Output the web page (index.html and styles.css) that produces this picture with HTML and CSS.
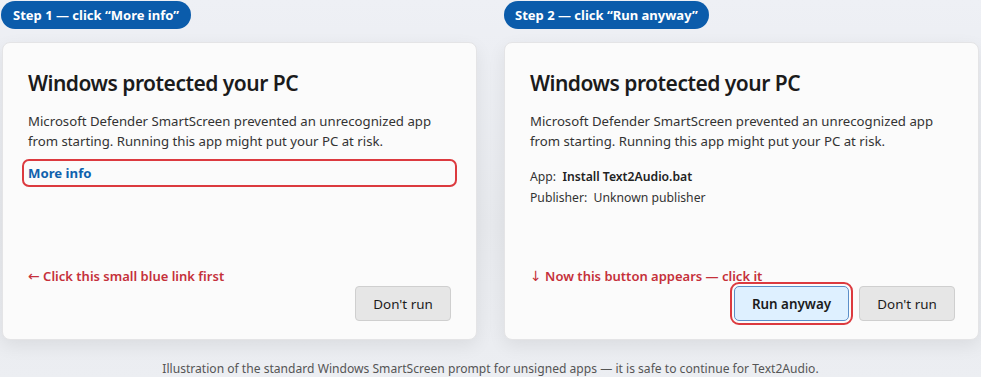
FILE: index.html
```html
<!DOCTYPE html>
<html lang="en">
<head>
    <meta charset="UTF-8">
    <meta name="viewport" content="width=device-width, initial-scale=1.0">
    <title>SmartScreen steps</title>
    <link rel="stylesheet" href="styles.css">
</head>
<body>
    <div class="steps">
        <div class="step">
            <span class="badge">Step 1 — click “More info”</span>
            <div class="dialog">
                <h2>Windows protected your PC</h2>
                <p class="desc">Microsoft Defender SmartScreen prevented an unrecognized app from starting. Running this app might put your PC at risk.</p>
                <div class="more-info">More info</div>
                <div class="spacer"></div>
                <div class="note"><span class="arrow">←</span> Click this small blue link first</div>
                <div class="actions">
                    <button class="btn">Don't run</button>
                </div>
            </div>
        </div>
        <div class="step">
            <span class="badge">Step 2 — click “Run anyway”</span>
            <div class="dialog dialog-right">
                <h2>Windows protected your PC</h2>
                <p class="desc">Microsoft Defender SmartScreen prevented an unrecognized app from starting. Running this app might put your PC at risk.</p>
                <div class="details">
                    <div>App:&nbsp; <strong>Install Text2Audio.bat</strong></div>
                    <div>Publisher:&nbsp; Unknown publisher</div>
                </div>
                <div class="spacer"></div>
                <div class="note"><span class="arrow">↓</span> Now this button appears — click it</div>
                <div class="actions">
                    <button class="btn btn-run">Run anyway</button>
                    <button class="btn">Don't run</button>
                </div>
            </div>
        </div>
    </div>
    <p class="caption">Illustration of the standard Windows SmartScreen prompt for unsigned apps — it is safe to continue for Text2Audio.</p>
</body>
</html>
```

FILE: styles.css
```css
body {
    font-family: "Noto Sans", "Open Sans", sans-serif;
    color: #1b1b1b;
    margin: 0;
    padding: 1px 2px 0 2px;
    background: linear-gradient(180deg, #eef0f5 0%, #e7e9ed 60%, #eceef2 100%);
    height: 376px;
    overflow: hidden;
}
.steps {
    display: grid;
    grid-template-columns: 475px 475px;
    gap: 27px;
}
.step {
    display: flex;
    flex-direction: column;
    align-items: flex-start;
}
.badge {
    background-color: #0b5cab;
    color: white;
    font-weight: 700;
    font-size: 13px;
    line-height: 28px;
    padding: 0 12px;
    border-radius: 14px;
    margin-left: -1px;
}
.step:nth-child(2) .badge {
    margin-left: 0;
    padding: 0 11px;
}
.dialog {
    align-self: stretch;
    margin-top: 13px;
    height: 298px;
    box-sizing: border-box;
    background-color: #fbfbfb;
    border: 1px solid #e4e4e6;
    border-radius: 8px;
    box-shadow: 0 6px 18px rgba(0, 0, 0, 0.07);
    padding: 26px 25px 18px 25px;
    display: flex;
    flex-direction: column;
}
.dialog-right {
    padding-right: 23px;
}
.dialog h2 {
    margin: 0;
    font-size: 21px;
    font-weight: 600;
    line-height: 28px;
    letter-spacing: -0.5px;
}
.desc {
    margin: 14px 0 0;
    font-size: 13.2px;
    line-height: 20px;
    color: #333;
}
.more-info {
    margin: 8px -6px 0;
    padding: 3px 4px;
    border: 2px solid #dc3a3f;
    border-radius: 7px;
    color: #0f62ae;
    font-weight: 700;
    font-size: 13.2px;
    line-height: 18px;
}
.details {
    margin-top: 15px;
    font-size: 12.2px;
    line-height: 21px;
    color: #333;
}
.details strong {
    font-weight: 600;
    color: #222;
}
.spacer {
    flex: 1;
}
.note {
    color: #c5303a;
    font-weight: 600;
    font-size: 13px;
    line-height: 17px;
}
.arrow {
    font-family: "DejaVu Sans", sans-serif;
    font-weight: 400;
    font-size: 14px;
}
.actions {
    display: flex;
    justify-content: flex-end;
    gap: 10px;
    margin-top: 1px;
}
.btn {
    font-family: inherit;
    font-size: 13.4px;
    color: #1b1b1b;
    background-color: #e6e6e6;
    border: 1px solid #cfcfcf;
    border-radius: 4px;
    height: 35px;
    width: 96px;
    padding: 0;
}
.btn-run {
    width: 115px;
    background-color: #def0ff;
    border-color: #5b8fc9;
    font-weight: 600;
    outline: 2px solid #dc3a3f;
    outline-offset: 2px;
    border-radius: 5px;
}
.caption {
    margin: 20px 0 0;
    text-align: center;
    font-size: 12.1px;
    color: #555;
}
```
